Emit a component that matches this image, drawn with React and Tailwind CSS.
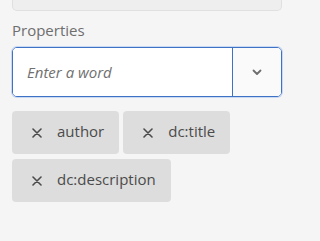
import React from 'react';

const tags = ['author', 'dc:title', 'dc:description'];

function CloseIcon() {
  return (
    <svg width="10" height="10" viewBox="0 0 10 10" className="shrink-0">
      <path d="M1 1L9 9M9 1L1 9" stroke="#4b4b4b" strokeWidth="1.6" strokeLinecap="round" />
    </svg>
  );
}

export default function App() {
  return (
    <div className="w-[320px] h-[241px] bg-[#f5f5f5] overflow-hidden" style={{ fontFamily: '"Open Sans", "Noto Sans", sans-serif' }}>
      <div className="px-3">
        {/* previous field (cut off at top) */}
        <div className="w-[270px] h-[11px] bg-[#eeeeee] border border-t-0 border-[#e0e0e0] rounded-b-[5px]" />

        <div className="mt-[9px] text-[15px] leading-[20px] text-[#6e6e6e]">Properties</div>

        <div className="mt-[7px] w-[270px] h-[50px] flex rounded-[5px] border border-[#3f72c4] shadow-[0_0_0_1px_#c8d9f3] overflow-hidden">
          <div className="flex-1 bg-white flex items-center pl-[14px] text-[15px] italic text-[#707070]">
            Enter a word
          </div>
          <div className="w-[49px] bg-[#fafafa] border-l border-[#3f72c4] flex items-center justify-center">
            <svg width="10" height="7" viewBox="0 0 10 7">
              <path d="M1.5 1.5L5 5L8.5 1.5" fill="none" stroke="#6e6e6e" strokeWidth="1.8" strokeLinecap="round" strokeLinejoin="round" />
            </svg>
          </div>
        </div>

        <div className="mt-[14px] w-[275px] flex flex-wrap gap-x-[4px] gap-y-[5px]">
          {tags.map(t => (
            <div key={t} className="h-[43px] flex items-center gap-[15px] pl-[20px] pr-[15px] bg-[#dddddd] rounded-[4px] text-[15px] text-[#4b4b4b]">
              <CloseIcon />
              <span className="leading-none -mt-[2px]">{t}</span>
            </div>
          ))}
        </div>
      </div>
    </div>
  );
}
